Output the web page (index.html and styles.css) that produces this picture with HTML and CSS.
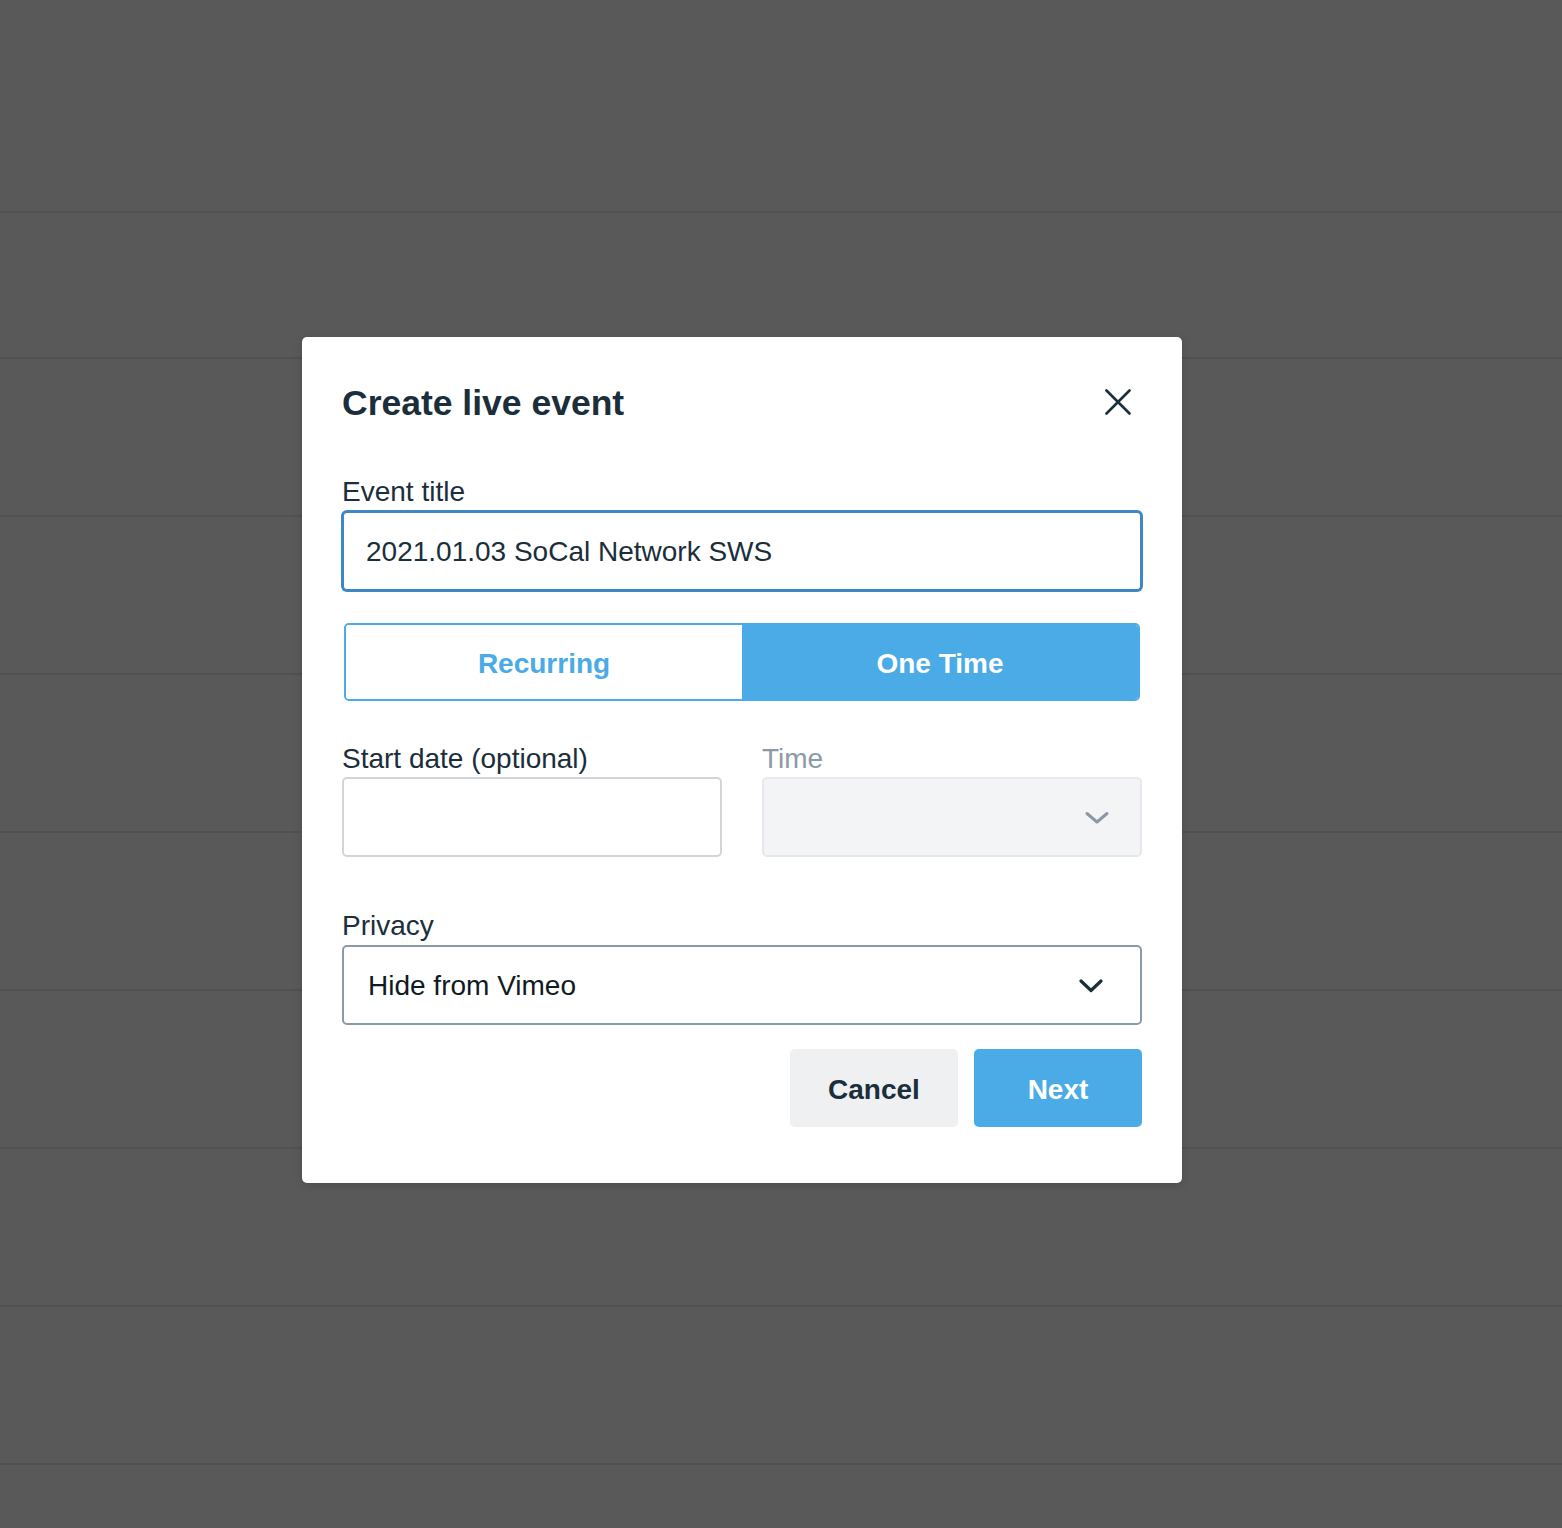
FILE: index.html
```html
<!DOCTYPE html>
<html lang="en">
<head>
<meta charset="utf-8">
<title>Create live event</title>
<link rel="stylesheet" href="styles.css">
</head>
<body>
<div class="page">
  <div class="row row-first"></div>
  <div class="row row-second"></div>
  <div class="row"></div>
  <div class="row"></div>
  <div class="row"></div>
  <div class="row"></div>
  <div class="row"></div>
  <div class="row"></div>
  <div class="row"></div>
</div>

<div class="modal" role="dialog" aria-labelledby="modal-title">
  <div class="modal-header">
    <h2 class="modal-title" id="modal-title">Create live event</h2>
    <button class="close-btn" aria-label="Close">
      <svg width="26" height="26" viewBox="0 0 26 26" aria-hidden="true">
        <path d="M1.5 1.5 L24.5 24.5 M24.5 1.5 L1.5 24.5" stroke="#1a2e3b" stroke-width="2.6" stroke-linecap="round" fill="none"/>
      </svg>
    </button>
  </div>

  <div class="field field-title">
    <label class="label">Event title</label>
    <div class="input input-focused">2021.01.03 SoCal Network SWS</div>
  </div>

  <div class="toggle">
    <div class="toggle-opt toggle-off">Recurring</div>
    <div class="toggle-opt toggle-on">One Time</div>
  </div>

  <div class="two-col">
    <div class="field">
      <label class="label">Start date (optional)</label>
      <div class="input input-date"></div>
    </div>
    <div class="field">
      <label class="label label-disabled">Time</label>
      <div class="input input-disabled">
        <svg class="chev" width="26" height="14" viewBox="0 0 26 14" aria-hidden="true">
          <path d="M3 2.5 L13 11 L23 2.5" stroke="#8b98a5" stroke-width="3" stroke-linecap="round" stroke-linejoin="round" fill="none"/>
        </svg>
      </div>
    </div>
  </div>

  <div class="field field-privacy">
    <label class="label">Privacy</label>
    <div class="input input-select">
      <span class="select-text">Hide from Vimeo</span>
      <svg class="chev chev-dark" width="26" height="14" viewBox="0 0 26 14" aria-hidden="true">
        <path d="M3 2 L13 11.5 L23 2" stroke="#1a2e3b" stroke-width="3.2" stroke-linecap="round" stroke-linejoin="round" fill="none"/>
      </svg>
    </div>
  </div>

  <div class="actions">
    <button class="btn btn-cancel">Cancel</button>
    <button class="btn btn-next">Next</button>
  </div>
</div>
</body>
</html>
```

FILE: styles.css
```css
* { box-sizing: border-box; }

html, body {
  margin: 0;
  padding: 0;
}

body {
  background: #595959;
  font-family: "Liberation Sans", Arial, sans-serif;
  color: #1a2e3b;
  width: 1562px;
  height: 1528px;
  overflow: hidden;
  position: relative;
}

.page {
  display: flex;
  flex-direction: column;
}

.row {
  height: 158px;
  border-bottom: 2px solid #515151;
  flex: none;
}
.row-first { height: 213px; }
.row-second { height: 146px; }

.modal {
  position: absolute;
  left: 302px;
  top: 337px;
  width: 880px;
  background: #ffffff;
  border-radius: 5px;
  padding: 42px 40px 56px;
  box-shadow: 0 2px 8px rgba(0,0,0,0.15);
  display: flex;
  flex-direction: column;
}

.modal-header {
  display: flex;
  align-items: center;
  justify-content: space-between;
  height: 48px;
  margin-bottom: 46px;
}

.modal-title {
  margin: 0;
  font-size: 35.5px;
  line-height: 48px;
  font-weight: 700;
  color: #1a2e3b;
}

.close-btn {
  width: 50px;
  height: 48px;
  border: 0;
  background: transparent;
  padding: 0;
  display: flex;
  align-items: center;
  justify-content: center;
  margin-right: -1px;
  margin-top: -2px;
}

.field {
  display: flex;
  flex-direction: column;
}

.label {
  font-size: 28px;
  line-height: 34px;
  color: #1a2e3b;
  padding-top: 2px;
  margin-bottom: 2px;
}

.label-disabled { color: #8c99a6; }

.input {
  height: 80px;
  border: 2px solid #d2d4d7;
  border-radius: 5px;
  background: #fff;
  display: flex;
  align-items: center;
  font-size: 28px;
  color: #1a2e3b;
  padding-top: 2px;
}

.input-focused {
  border-color: #3d87c7;
  box-shadow: 0 0 0 1px #3d87c7;
  padding-left: 22px;
}

.toggle {
  margin: 32px 2px 0;
  height: 78px;
  display: flex;
  border: 2px solid #4aabe6;
  border-radius: 5px;
  overflow: hidden;
}

.toggle-opt {
  flex: 1 1 0;
  display: flex;
  align-items: center;
  justify-content: center;
  font-size: 28px;
  font-weight: 700;
  padding-top: 4px;
}

.toggle-off {
  color: #4aabe6;
  background: #fff;
}

.toggle-on {
  color: #fff;
  background: #4aabe6;
}

.two-col {
  margin-top: 39px;
  display: grid;
  grid-template-columns: 380px 380px;
  column-gap: 40px;
}

.two-col .label { margin-bottom: 1px; }

.input-disabled {
  background: #f3f4f6;
  border-color: #e6e8eb;
  justify-content: flex-end;
  padding-right: 30px;
}

.field-privacy {
  margin-top: 50px;
}

.input-select {
  border-color: #8a9aa9;
  justify-content: space-between;
  padding: 2px 36px 0 24px;
  color: #111;
}

.select-text { color: #0f1a22; }

.chev { display: block; }

.actions {
  margin-top: 24px;
  display: flex;
  justify-content: flex-end;
  gap: 16px;
}

.btn {
  width: 168px;
  height: 78px;
  border: 0;
  border-radius: 5px;
  font-family: "Liberation Sans", Arial, sans-serif;
  font-size: 28px;
  font-weight: 700;
  padding: 4px 0 0;
}

.btn-cancel {
  background: #eef0f2;
  color: #1a2e3b;
}

.btn-next {
  background: #4aabe6;
  color: #fff;
}
```
